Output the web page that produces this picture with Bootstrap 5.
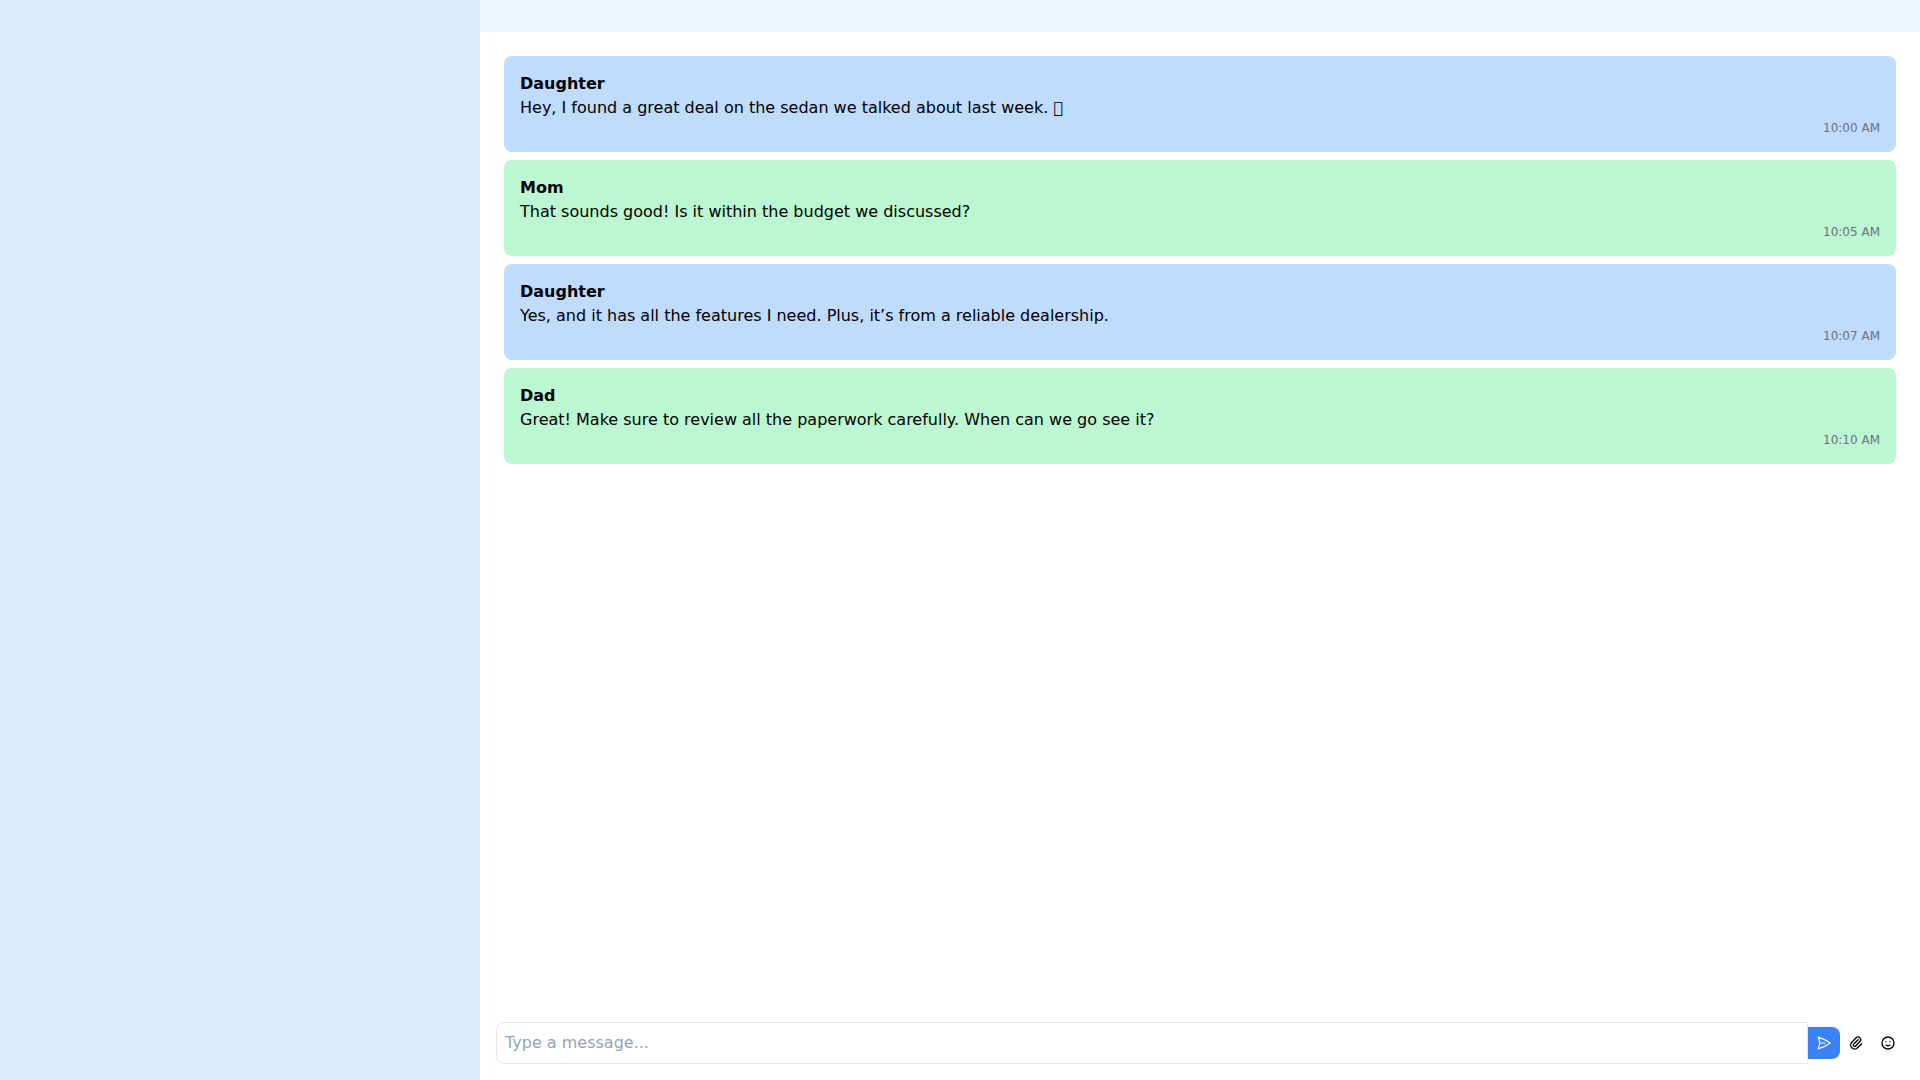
<!DOCTYPE html>
<html lang="en">
<head>
<meta charset="utf-8">
<title>Family chat</title>
<link href="https://cdn.jsdelivr.net/npm/bootstrap@5.3.0/dist/css/bootstrap.min.css" rel="stylesheet">
<style>
html, body { height: 100%; }
body { font-family: "DejaVu Sans", sans-serif; font-size: 16px; line-height: 24px; color: #000; background: #fff; }
.side-pane { width: 480px; background: #dbeafe; }
.top-strip { height: 32px; background: #eff6ff; }
.msg-list { padding: 24px; min-height: 0; }
.msg-item { padding: 16px; border-radius: 8px; height: 96px; }
.msg-daughter { background: #bfdbfe; }
.msg-parent { background: #bbf7d0; }
.msg-time { font-size: 12px; line-height: 16px; color: #6b7280; text-align: right; }
.composer { padding: 16px; }
.msg-field { height: 42px; padding: 7px 8px 9px; border: 1px solid #e5e7eb; border-radius: 8px 0 0 8px; font-size: 16px; line-height: normal; box-shadow: none; color: #000; }
.msg-field:focus { border-color: #e5e7eb; box-shadow: none; }
.msg-field::placeholder { color: #94a3b8; opacity: 1; }
.tool-btn { width: 32px; height: 32px; padding: 8px; border: 0; background: transparent; color: #000; line-height: 0; }
.tool-send { background: #3b82f6; color: #fff; border-radius: 0 8px 8px 0; }
.tool-btn svg { display: block; width: 16px; height: 16px; fill: none; stroke: currentColor; stroke-width: 2; stroke-linecap: round; stroke-linejoin: round; }
.tool-send svg { stroke-width: 1.75; }
</style>
</head>
<body>
<div class="d-flex vh-100 overflow-hidden">
  <aside class="side-pane flex-shrink-0"></aside>
  <main class="d-flex flex-column flex-grow-1">
    <div class="top-strip flex-shrink-0"></div>
    <div class="msg-list flex-grow-1 d-flex flex-column gap-2">
      <div class="msg-item msg-daughter">
        <div class="fw-bold">Daughter</div>
        <div>Hey, I found a great deal on the sedan we talked about last week. &#xE000;</div>
        <div class="msg-time">10:00 AM</div>
      </div>
      <div class="msg-item msg-parent">
        <div class="fw-bold">Mom</div>
        <div>That sounds good! Is it within the budget we discussed?</div>
        <div class="msg-time">10:05 AM</div>
      </div>
      <div class="msg-item msg-daughter">
        <div class="fw-bold">Daughter</div>
        <div>Yes, and it has all the features I need. Plus, it’s from a reliable dealership.</div>
        <div class="msg-time">10:07 AM</div>
      </div>
      <div class="msg-item msg-parent">
        <div class="fw-bold">Dad</div>
        <div>Great! Make sure to review all the paperwork carefully. When can we go see it?</div>
        <div class="msg-time">10:10 AM</div>
      </div>
    </div>
    <div class="composer d-flex align-items-center flex-shrink-0">
      <input type="text" class="form-control msg-field flex-grow-1" placeholder="Type a message...">
      <button type="button" class="btn tool-btn tool-send flex-shrink-0" aria-label="Send">
        <svg viewBox="0 0 24 24"><path d="M6 12L3.269 3.126A59.768 59.768 0 0121.485 12 59.77 59.77 0 013.27 20.876L5.999 12zm0 0h7.5"/></svg>
      </button>
      <button type="button" class="btn tool-btn flex-shrink-0" aria-label="Attach">
        <svg viewBox="0 0 24 24"><path d="M15.172 7l-6.586 6.586a2 2 0 102.828 2.828l6.414-6.586a4 4 0 00-5.656-5.656l-6.415 6.585a6 6 0 108.486 8.486L20.5 13"/></svg>
      </button>
      <button type="button" class="btn tool-btn flex-shrink-0" aria-label="Emoji">
        <svg viewBox="0 0 24 24"><path d="M14.828 14.828a4 4 0 01-5.656 0M9 10h.01M15 10h.01M21 12a9 9 0 11-18 0 9 9 0 0118 0z"/></svg>
      </button>
    </div>
  </main>
</div>
<script src="https://cdn.jsdelivr.net/npm/bootstrap@5.3.0/dist/js/bootstrap.bundle.min.js"></script>
</body>
</html>
